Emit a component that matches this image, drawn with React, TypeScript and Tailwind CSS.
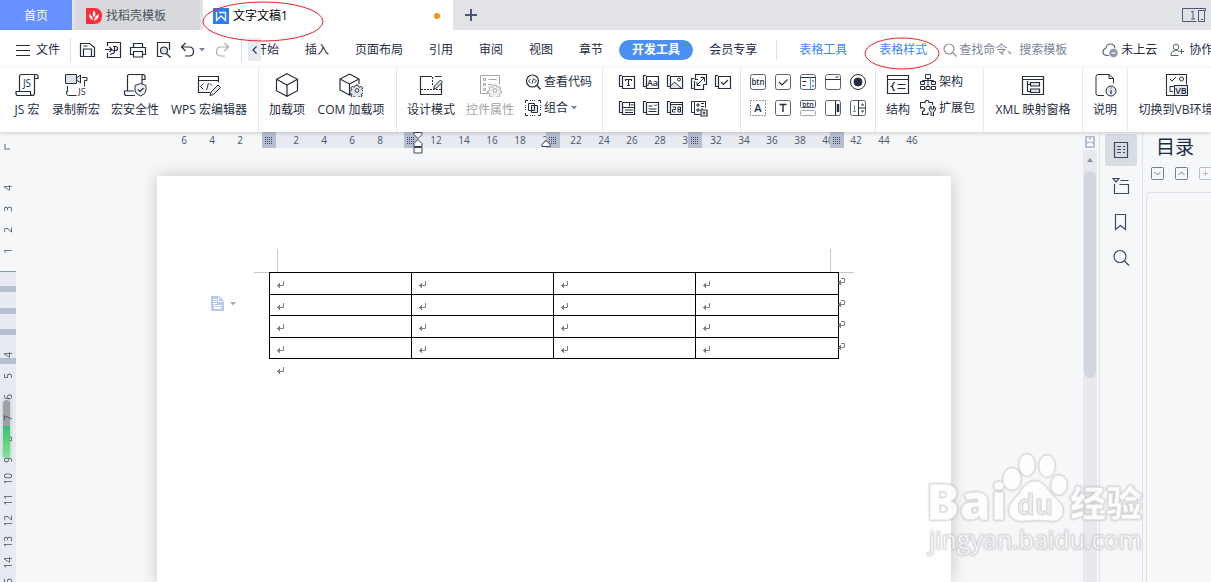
import type { ReactNode } from "react";
import clsx from "clsx";

interface SvgProps {
  w?: number;
  h?: number;
  className?: string;
  children: ReactNode;
}

function Svg({ w = 24, h = w, className, children }: SvgProps) {
  return (
    <svg
      width={w}
      height={h}
      viewBox={`0 0 ${w} ${h}`}
      fill="none"
      stroke="currentColor"
      aria-hidden="true"
      className={clsx("shrink-0", className)}
    >
      {children}
    </svg>
  );
}

interface GlyphProps {
  x: number;
  y: number;
  size: number;
  bold?: boolean;
  children: string;
}

function Glyph({ x, y, size, bold, children }: GlyphProps) {
  return (
    <text x={x} y={y} fontSize={size} fontWeight={bold ? 600 : 400} textAnchor="middle" fill="currentColor" stroke="none">
      {children}
    </text>
  );
}

const gearPath = "M-1 -5h2l.5 1.6 1.3.6 1.5-.8 1.4 1.4-.8 1.5.5 1.2 1.1.5v2l-1.5.5-.6 1.2.7 1.3-1.4 1.4-1.4-.7-1.2.5-.5 1.5h-2l-.5-1.5-1.2-.5-1.4.7-1.4-1.4.7-1.3-.6-1.2-1.5-.5v-2l1.5-.5.5-1.2-.8-1.5 1.4-1.4 1.5.8 1.2-.6z";

/* ---------- Ribbon icons, 24px ---------- */

const JsMacroIcon = (
  <Svg>
    <path d="M4.500 18.500V3.500q0-2 2-2H21q2 0 2 2v2h-3.500M21 1.500q-1.500 0-1.500 2V20q0 2.500-2 2.500H3q-2 0-2-2v-2h14.500v2q0 2 2 2" strokeWidth="1.200" />
    <Glyph x={12} y={14} size={10}>JS</Glyph>
  </Svg>
);

const RecordIcon = (
  <Svg>
    <path d="M1.500 1.500h11v9h-11zM12.500 5l4-3v8l-4-3z" fill="#dfe2e8" />
    <path d="M3.500 13v6M3.500 18.500h-1v1.500q0 2.500 2 2.500h8M18 4.500h5v3h-2.500v6" />
    <Glyph x={18} y={22} size={9}>JS</Glyph>
  </Svg>
);

const SecurityIcon = (
  <Svg>
    <path d="M4.500 17.500V3.500q0-2 2-2H20q2 0 2 2v3h-3v-3q0-2 1.500-2M19 6v5M12 22.500H3.500q-2 0-2-2v-2.500H11" strokeWidth="1.200" />
    <path d="M17.500 10.500l5.500 2v4.500q0 4-5.500 6-5.500-2-5.500-6v-4.500z" fill="#eef0f4" />
    <path d="M15 16.500l2 2 3.500-3.500" strokeWidth="1.200" />
  </Svg>
);

const EditorIcon = (
  <Svg>
    <path d="M13 19.500H1.500v-16h20v6M1.500 7.500h20" strokeWidth="1.200" />
    <path d="M6.500 10.500l-3 3 3 3M9.500 17l2-7M13 10.500l2 2" />
    <path d="M13 22.500l1-3.500 7-7 2.500 2.500-7 7z" fill="#dfe2e8" />
  </Svg>
);

const CubeIcon = (
  <Svg>
    <path d="M12 .7l10.500 5.600v11.400L12 23.300 1.500 17.700V6.300zM1.500 6.300L12 12l10.500-5.700M12 12v11" strokeWidth="1.200" />
  </Svg>
);

const ComIcon = (
  <Svg>
    <path d="M10.500 1l9.500 5v5M10.500 1L1 6v11l9.500 5V11L1 6M10.500 11L20 6M10.500 22l1.500-.5" strokeWidth="1.200" />
    <g transform="translate(18 17)">
      <path d={gearPath} fill="#dfe2e8" />
      <circle cx="0" cy=".5" r="1.800" fill="#fff" />
    </g>
  </Svg>
);

const DesignIcon = (
  <Svg>
    <path d="M13 3.500H1.500v18h21v-11M16 3.500h6.500" strokeWidth="1.200" />
    <path d="M13.500 4v8M2 16.500h20" strokeDasharray="2 1" />
    <path d="M14.500 16.500l1-3.500 6-6 2 2-6 6z" fill="#dfe2e8" />
  </Svg>
);

const PropertyIcon = (
  <Svg>
    <path d="M11 20.500H2.500v-18h19v9M5.500 5.500h2v2h-2zM5.500 10.500h2v2h-2zM5.500 15.500h2v2h-2zM10.500 6.500h8M10.500 11.500h4" />
    <g transform="translate(17 17)">
      <path d={gearPath} fill="#eee" />
      <circle cx="0" cy=".5" r="1.800" fill="#fff" />
    </g>
  </Svg>
);

const StructureIcon = (
  <Svg>
    <path d="M1.500 2.500h21v18h-21zM1.500 6.500h21" strokeWidth="1.200" />
    <path d="M9 9.500q-2 0-2 2 0 2-2.500 2 2.500 0 2.500 2 0 2 2 2M11.500 11.500h8M11.500 15.500h8" strokeWidth="1.200" />
  </Svg>
);

const XmlIcon = (
  <Svg>
    <path d="M1.500 3.500h21v18h-21zM1.500 6.500h21M6.500 8v10.500h3M6.500 11.500h3" strokeWidth="1.200" />
    <path d="M9.500 9.500h9v3.500h-9zM9.500 16h9v3.500h-9z" fill="#dfe2e8" strokeWidth="1.200" />
  </Svg>
);

const HelpIcon = (
  <Svg>
    <path d="M11 22.500H5q-2 0-2-2V3.500q0-2 2-2h11l4.500 4v5M16 1.500v4h4.500" />
    <circle cx="18" cy="18" r="5" fill="#e4e7ec" />
    <path d="M18 17v4M18 14.500v1" strokeWidth="1.200" />
  </Svg>
);

const VbIcon = (
  <Svg>
    <path d="M10 22.500H2.500v-21h20v10" strokeWidth="1.100" />
    <path d="M6 6l2 2 4-4M10 13.500H6v5h3" />
    <circle cx="17.500" cy="6" r="2" />
    <rect x="10.500" y="12.500" width="13" height="10" fill="#e4e7ec" />
    <Glyph x={17} y={21} size={9} bold>VB</Glyph>
  </Svg>
);

/* ---------- Ribbon icons, 16px ---------- */

const ViewCodeIcon = (
  <Svg w={16}>
    <circle cx="7.500" cy="7" r="6" strokeWidth="1.200" />
    <path d="M12 11.500l3.500 4" strokeWidth="1.400" />
    <path d="M5.500 5l-2 2 2 2M7 9.500l1.500-5M9.500 5l2 2-2 2" />
  </Svg>
);

const GroupIcon = (
  <Svg w={16}>
    <path d="M.5 3V.5H3M13 .5h2.500V3M.5 13v2.500H3M13 15.500h2.500V13" />
    <path d="M5 .5h6M5 15.500h6M.5 5v6M15.500 5v6" strokeDasharray="1 1" />
    <path d="M6.500 5.500h6v7h-6z" fill="#dfe2e8" />
    <path d="M3.500 3.500h6v7h-6z" />
  </Svg>
);

const SchemaIcon = (
  <Svg w={16}>
    <path d="M5.500 .5h5v4h-5zM.5 7.500h4v3h-4zM11.500 7.500h4v3h-4zM6 12.500h4v3H6zM.5 12.500h4v3h-4zM11.500 12.500h4v3h-4zM8 4.500v8M2.500 7.500v-1h11v1" />
  </Svg>
);

const PackageIcon = (
  <Svg w={16}>
    <path d="M8 14.500H2.500v-3q2-.5 2-2t-2-2q-1.500 0-2 1V2.500h4.500Q5 .5 7 .5t2 2h3.500V5M8 14.500v-2" strokeWidth="1.200" />
    <path d="M11 6q-2 1-2 3 0 2 2 3v4h2.500v-4q2-1 2-3 0-2-2-3v3H11z" fill="#dfe2e8" />
  </Svg>
);

/* ---------- Content controls, 18px ---------- */

function SheetIcon({ children }: { children: ReactNode }) {
  return (
    <Svg w={18}>
      <path d="M4 2.500H1.500v11H4M4.500 3.500h12v12h-12z" strokeWidth="1.200" />
      {children}
    </Svg>
  );
}

const contentControls = [
  { name: "格式文本", icon: <SheetIcon><path d="M7.500 8V6.500h6V8M10.500 6.500v6M9 12.500h3" strokeWidth="1.200" /></SheetIcon> },
  { name: "纯文本", icon: <SheetIcon><Glyph x={10.500} y={12.500} size={9} bold>Aa</Glyph></SheetIcon> },
  { name: "图片", icon: <SheetIcon><path d="M4.500 15.500V13l4-4 7 6.500z" fill="#dfe2e8" /><circle cx="13" cy="6.500" r="1.500" fill="#fff" /></SheetIcon> },
  {
    name: "构建基块",
    icon: (
      <Svg w={18}>
        <path d="M5.500 6.500v-5h11v10h-3M4 5.500H1.500v10h2M4.500 8v8.500h9v-5M4.500 6.500H8" strokeWidth="1.200" />
        <path d="M7 12l7-7M10.500 4.500h4v4M7 9v3.500h3.500" />
      </Svg>
    ),
  },
  { name: "复选框", icon: <SheetIcon><path d="M7 9l2.500 2.500L14 7" strokeWidth="1.200" /></SheetIcon> },
  { name: "组合框", icon: <SheetIcon><path d="M4.500 8.500h12M11.500 3.500v4M12.500 5l1.500 1.500L15.500 5M7 11h8M7 13.500h8" /></SheetIcon> },
  { name: "下拉列表", icon: <SheetIcon><path d="M12 5.500l1.500 1.500L15 5.500M6.500 7h4M6.500 10h8M6.500 12.500h8" /></SheetIcon> },
  { name: "日期选取器", icon: <SheetIcon><path d="M4.500 5.500h12M6.500 8h3v2.500h-3V13h3M12 8h2.500v5H12zM12 10.500h2.500" /></SheetIcon> },
  {
    name: "重复节",
    icon: (
      <Svg w={18}>
        <path d="M4 2.500H1.500v11H4M10 15.500H4.500v-13h11V9M7 5h2v2H7zM7 10h2v2H7zM11 4.500h3M11 7.500h3M11 10h2" />
        <path d="M11 11h6v6h-6zM14 12.500v3M12.500 14h3" strokeWidth="1.200" fill="#fff" />
      </Svg>
    ),
  },
];

/* ---------- Legacy form controls, 18px ---------- */

function FrameIcon({ children }: { children: ReactNode }) {
  return (
    <Svg w={18}>
      <rect x="1.500" y="1.500" width="15" height="15" rx="2" stroke="#5b6275" />
      {children}
    </Svg>
  );
}

const formControls = [
  { name: "命令按钮", icon: <FrameIcon><Glyph x={9} y={12} size={8} bold>btn</Glyph></FrameIcon> },
  { name: "复选框控件", icon: <FrameIcon><path d="M5 9l3 3 5.500-5.500" strokeWidth="1.200" /></FrameIcon> },
  { name: "列表框", icon: <FrameIcon><path d="M1.500 4.500h15M3.500 8.500h4M3.500 12.500h3M13 8h2M13 13h2" /><path d="M11.500 4.500v12" stroke="#4a90f0" /></FrameIcon> },
  { name: "组合框控件", icon: <FrameIcon><path d="M1.500 6.500h15M11.500 4h3" /></FrameIcon> },
  { name: "选项按钮", icon: <Svg w={18}><circle cx="9" cy="9" r="7.500" fill="#fff" /><circle cx="9" cy="9" r="4" fill="currentColor" /></Svg> },
  { name: "标签", icon: <Svg w={18}><rect x="1.500" y="1.500" width="15" height="15" strokeDasharray="1 2" /><Glyph x={9} y={13} size={11} bold>A</Glyph></Svg> },
  { name: "文本框", icon: <FrameIcon><path d="M5.500 5.500h7M9 5.500V13" strokeWidth="1.400" /></FrameIcon> },
  {
    name: "切换按钮",
    icon: (
      <Svg w={18}>
        <rect x="1.500" y="1.500" width="15" height="7" rx="1" stroke="#5b6275" />
        <rect x="1.500" y="11.500" width="15" height="5" rx="1" stroke="#a4a8b3" />
        <Glyph x={9} y={7.500} size={7} bold>btn</Glyph>
      </Svg>
    ),
  },
  { name: "滚动条", icon: <FrameIcon><path d="M11.500 1.500v15" /><path d="M14 5v8" strokeWidth="2.500" /></FrameIcon> },
  { name: "数值调节钮", icon: <FrameIcon><path d="M9.500 1.500v15M9.500 9h7M12 6h3M12 12h3M13 5h1M13 13h1" /><path d="M4.500 7.500l1-1v6M4 12.500h3" stroke="#8b90a0" /></FrameIcon> },
];

/* ---------- Ribbon ---------- */

interface RibbonButtonProps {
  icon: ReactNode;
  label: string;
  className: string;
  disabled?: boolean;
}

function RibbonButton({ icon, label, className, disabled }: RibbonButtonProps) {
  return (
    <button
      type="button"
      disabled={disabled}
      className={clsx("flex shrink-0 flex-col items-center gap-[5px] leading-4 whitespace-nowrap", disabled && "text-[#a6a6a6]", className)}
    >
      {icon}
      <span>{label}</span>
    </button>
  );
}

function RibbonGroup({ className, children }: { className?: string; children: ReactNode }) {
  return (
    <div className={clsx("flex shrink-0 items-start border-r border-[#e6e8ec] pt-[5px]", className ?? "gap-[11px] px-[10px]")}>
      {children}
    </div>
  );
}

function SmallButton({ icon, label, caret }: { icon: ReactNode; label: string; caret?: boolean }) {
  return (
    <button type="button" className="flex h-[18px] items-center gap-[3px] whitespace-nowrap">
      {icon}
      <span>{label}</span>
      {caret && <Caret />}
    </button>
  );
}

function Caret() {
  return (
    <Svg w={6} h={4} className="text-[#7a86a0]">
      <path d="M0 0h6L3 3.500z" fill="currentColor" stroke="none" />
    </Svg>
  );
}

function Ribbon() {
  return (
    <div className="relative z-10 flex h-16 shrink-0 bg-white shadow-[0_1px_4px_rgba(0,0,0,0.18)]">
      <RibbonGroup className="gap-[11px] pr-[10px] pl-[13px]">
        <RibbonButton icon={JsMacroIcon} label="JS 宏" className="w-7" />
        <RibbonButton icon={RecordIcon} label="录制新宏" className="w-12" />
        <RibbonButton icon={SecurityIcon} label="宏安全性" className="w-12" />
        <RibbonButton icon={EditorIcon} label="WPS 宏编辑器" className="w-[78px]" />
      </RibbonGroup>
      <RibbonGroup>
        <RibbonButton icon={CubeIcon} label="加载项" className="w-9" />
        <RibbonButton icon={ComIcon} label="COM 加载项" className="w-[70px]" />
      </RibbonGroup>
      <RibbonGroup>
        <RibbonButton icon={DesignIcon} label="设计模式" className="w-12" />
        <RibbonButton icon={PropertyIcon} label="控件属性" className="w-12" disabled />
        <div className="flex flex-col gap-2">
          <SmallButton icon={ViewCodeIcon} label="查看代码" />
          <SmallButton icon={GroupIcon} label="组合" caret />
        </div>
      </RibbonGroup>
      <RibbonGroup className="pr-2 pl-[15px]">
        <div className="grid grid-cols-5 gap-x-[6px] gap-y-2">
          {contentControls.map((c) => (
            <button key={c.name} type="button" aria-label={c.name}>{c.icon}</button>
          ))}
        </div>
      </RibbonGroup>
      <RibbonGroup className="px-2">
        <div className="grid grid-cols-5 gap-x-[7px] gap-y-2">
          {formControls.map((c) => (
            <button key={c.name} type="button" aria-label={c.name}>{c.icon}</button>
          ))}
        </div>
      </RibbonGroup>
      <RibbonGroup className="gap-[10px] pr-2 pl-[10px]">
        <RibbonButton icon={StructureIcon} label="结构" className="w-6" />
        <div className="flex flex-col gap-2">
          <SmallButton icon={SchemaIcon} label="架构" />
          <SmallButton icon={PackageIcon} label="扩展包" />
        </div>
      </RibbonGroup>
      <RibbonGroup>
        <RibbonButton icon={XmlIcon} label="XML 映射窗格" className="w-[78px]" />
      </RibbonGroup>
      <RibbonGroup>
        <RibbonButton icon={HelpIcon} label="说明" className="w-6" />
      </RibbonGroup>
      <div className="flex shrink-0 items-start px-[10px] pt-[5px]">
        <RibbonButton icon={VbIcon} label="切换到VB环境" className="w-[76px]" />
      </div>
    </div>
  );
}

/* ---------- Tabs and menu ---------- */

function RedCircle({ className }: { className: string }) {
  return (
    <svg className={clsx("pointer-events-none absolute z-20 overflow-visible", className)} aria-hidden="true">
      <ellipse cx="50%" cy="50%" rx="50%" ry="50%" fill="none" stroke="#e8212b" />
    </svg>
  );
}

function TabBar() {
  return (
    <div className="flex h-[30px] shrink-0 bg-[#e1e3e7]">
      <button type="button" className="w-[72px] bg-[#6691ff] pt-px text-white">首页</button>
      <button type="button" className="ml-[3px] flex w-[125px] items-center gap-1 bg-[#d8d9dc] pt-px pl-[11px] text-[#4d5361]">
        <Svg w={16}>
          <path d="M0 0h8q8 0 8 8t-8 8H0z" fill="#fb2d3a" stroke="none" />
          <path d="M8 2.500q3 3 0 7-2.500-4 0-7zM3 6q3.500 1 4 6-4-1-4-6zM13 6q0 5-5 7 .5-5 5-7z" fill="#fff" stroke="none" />
        </Svg>
        <span>找稻壳模板</span>
      </button>
      <button type="button" className="relative ml-[3px] flex w-[250px] items-center bg-white pt-px pl-[10px] text-black">
        <Svg w={16}>
          <rect width="16" height="16" fill="#2b7cf3" stroke="none" />
          <path d="M3.500 4v8.500L8 8l4.500 4.500V4.500H6" stroke="#fff" strokeWidth="1.300" />
        </Svg>
        <span className="ml-1">文字文稿1</span>
        <span className="mr-[13px] ml-auto size-[6px] rounded-full bg-[#e69a0c]" />
        <RedCircle className="top-[2px] left-0 h-[39px] w-[120px]" />
      </button>
      <button type="button" aria-label="新建标签" className="ml-3 self-center text-[#4c5877]">
        <Svg w={12}>
          <path d="M6 0v12M0 6h12" strokeWidth="2" />
        </Svg>
      </button>
      <button type="button" aria-label="窗口" className="mr-[5px] ml-auto text-[#4c5877]">
        <Svg w={24} h={14}>
          <path d="M14.500 13.500H.5V.5h23V3M9 4l2-1v8M9 11h4" />
          <path d="M16.500 2.500h6v11h-6zM19 11.500h2" />
        </Svg>
      </button>
    </div>
  );
}

const quickActions = [
  {
    name: "保存",
    icon: <Svg w={18}><path d="M1.500 15.500v-13h9l5 4v9zM4.500 15v-7h8v7M4.500 5h4" strokeWidth="1.200" /></Svg>,
  },
  {
    name: "输出为PDF",
    icon: <Svg w={18}><path d="M3.500 5V1.500h13v15h-13V12M1 8.500h7M5.500 6L8 8.500 5.500 11M9 5.500h2.500q2 0 2 2t-2 2H8.500M10.500 6v4q0 2.500-2 2.500T6.500 14" strokeWidth="1.200" /></Svg>,
  },
  {
    name: "打印",
    icon: <Svg w={18}><path d="M4.500 6.500v-4h9v4M4.500 13.500h-3v-7h15v7h-3M4.500 10.500h9v5.500h-9z" strokeWidth="1.200" /></Svg>,
  },
  {
    name: "打印预览",
    icon: <Svg w={18}><path d="M8 15.500H3.500v-14h12V9" strokeWidth="1.200" /><circle cx="10" cy="9.500" r="3.500" strokeWidth="1.200" fill="#dfe2e8" /><path d="M12.500 12.500l4 4" strokeWidth="1.200" /></Svg>,
  },
  {
    name: "撤销",
    icon: <Svg w={18}><path d="M6.500 2L2.500 6l4 4M3 6h7q4.500 0 4.500 4.500T10 15H6" strokeWidth="1.200" /></Svg>,
  },
];

const menuTabs = ["插入", "页面布局", "引用", "审阅", "视图", "章节"];

function MenuBar() {
  return (
    <div className="flex h-[38px] shrink-0 items-center bg-white pt-px whitespace-nowrap">
      <button type="button" className="ml-4 flex shrink-0 items-center gap-[6px]">
        <Svg w={14}>
          <path d="M0 2.500h14M0 7.500h14M0 12.500h14" />
        </Svg>
        <span>文件</span>
      </button>
      <div className="ml-[10px] h-6 w-px shrink-0 bg-[#dcdfe4]" />
      <div className="ml-2 flex shrink-0 items-center gap-[7px]">
        {quickActions.map((a) => (
          <button key={a.name} type="button" aria-label={a.name}>{a.icon}</button>
        ))}
      </div>
      <button type="button" aria-label="撤销列表" className="ml-[2px] shrink-0">
        <Caret />
      </button>
      <button type="button" aria-label="恢复" disabled className="ml-2 shrink-0 text-[#a9adb5]">
        <Svg w={18}>
          <path d="M11.500 2l4 4-4 4M15 6H8q-4.500 0-4.500 4.500T8 15h4" strokeWidth="1.200" />
        </Svg>
      </button>
      <div className="ml-[10px] h-6 w-px shrink-0 bg-[#dcdfe4]" />
      <button type="button" aria-label="向左滚动" className="ml-[6px] flex h-[23px] w-[13px] shrink-0 items-center justify-center bg-[#e7eaf0]">
        <Svg w={5} h={8}>
          <path d="M4.500 .5L1 4l3.500 3.500" strokeWidth="1.200" />
        </Svg>
      </button>
      <button type="button" className="flex w-[18px] shrink-0 justify-end overflow-hidden">开始</button>
      <nav className="ml-[26px] flex shrink-0 items-center gap-[26px]">
        {menuTabs.map((tab) => (
          <button key={tab} type="button">{tab}</button>
        ))}
      </nav>
      <button type="button" className="ml-4 h-5 shrink-0 rounded-full bg-[#4a90f2] px-[13px] font-bold text-white">开发工具</button>
      <button type="button" className="ml-4 shrink-0">会员专享</button>
      <div className="ml-[19px] h-5 w-px shrink-0 bg-[#dcdfe4]" />
      <button type="button" className="ml-[22px] shrink-0 text-[#4089f0]">表格工具</button>
      <button type="button" className="relative ml-8 shrink-0 text-[#4089f0]">
        表格样式
        <RedCircle className="-top-1 -left-[14px] h-[31px] w-[74px]" />
      </button>
      <label htmlFor="command-search" className="ml-4 shrink-0 text-[#8b93a6]">
        <Svg w={14}>
          <circle cx="6" cy="6" r="5" strokeWidth="1.200" />
          <path d="M9.500 9.500l4 4" strokeWidth="1.200" />
        </Svg>
      </label>
      <input
        id="command-search"
        type="text"
        aria-label="查找命令"
        placeholder="查找命令、搜索模板"
        className="ml-[2px] w-[143px] shrink-0 bg-transparent outline-none placeholder:text-[#7c8397]"
      />
      <button type="button" className="flex shrink-0 items-center gap-[3px]">
        <Svg w={16} className="text-[#5c6375]">
          <path d="M7 13.500H4.500Q1 13 1 10t3-4q.5-4 4.500-4T13 6.500" strokeWidth="1.200" />
          <circle cx="11.500" cy="11" r="4.300" fill="#8f97aa" stroke="none" />
          <path d="M9.500 11h4" stroke="#fff" strokeWidth="1.300" />
        </Svg>
        <span>未上云</span>
      </button>
      <button type="button" className="ml-[13px] flex shrink-0 items-center gap-[5px]">
        <Svg w={14}>
          <circle cx="6" cy="4" r="2.800" stroke="#5c6375" />
          <path d="M8.500 12.500H1V11q.5-3.500 5-3.500 2 0 3 .5M11.500 6v5M9 8.500h5" stroke="#5c6375" />
        </Svg>
        <span>协作</span>
      </button>
    </div>
  );
}

/* ---------- Rulers ---------- */

const rulerNumbers = [6, 4, 2, 0, ...Array.from({ length: 23 }, (_, i) => (i + 1) * 2)];
const columnHandles = ["left-[262px]", "left-[404px]", "left-[546px]", "left-[688px]", "left-[830px]"];

function HorizontalRuler() {
  return (
    <div className="relative flex h-4 shrink-0 pl-[170px] text-[10px] leading-4 text-[#4b556b]">
      <div className="absolute inset-y-0 left-[276px] w-[554px] bg-[#e7eaf0]" />
      {rulerNumbers.map((n, i) => (
        <span key={i} className={clsx("relative w-7 shrink-0 text-center", (n === 0 || n === 10) && "invisible")}>{n}</span>
      ))}
      {columnHandles.map((left) => (
        <div key={left} className={clsx("absolute inset-y-0 w-[14px] bg-[#b6bed1]", left)}>
          <Svg w={14} h={16} className="text-[#3d465c]">
            <path d="M3 5.500h8M3 7.500h8M3 9.500h8M3 11.500h8" strokeDasharray="1 1" />
          </Svg>
        </div>
      ))}
      <Svg w={10} h={22} className="absolute top-0 left-[413px] text-[#3d465c]">
        <path d="M1 .5h8v2L5 6.500 1 2.500zM1 14.500v-3l4-4 4 4v3zM1 15.500h8v5.500H1z" fill="#fff" />
      </Svg>
      <Svg w={10} h={16} className="absolute top-0 left-[541px] text-[#3d465c]">
        <path d="M1 14.500v-2l4-4 4 4v2z" fill="#fff" />
      </Svg>
    </div>
  );
}

const marginNumbers = [4, 3, 2, 1];
const bodyNumbers = Array.from({ length: 15 }, (_, i) => i + 1);
const rowHandles = ["top-[14px]", "top-[36px]", "top-[57px]", "top-[86px]"];

function RulerNumber({ n, faint }: { n: number; faint?: boolean }) {
  return (
    <span className="flex h-[21px] shrink-0 items-end justify-center">
      <span className={clsx("rotate-180 [writing-mode:vertical-rl]", faint && "invisible")}>{n}</span>
    </span>
  );
}

function VerticalRuler() {
  return (
    <div className="relative w-4 shrink-0 text-[10px] leading-3 text-[#4b556b]">
      <Svg w={6} className="-mt-1 ml-1 text-[#a9afbe]">
        <path d="M1 0v5h5" strokeWidth="2" />
      </Svg>
      <div className="mt-[20px] flex h-[101px] flex-col">
        {marginNumbers.map((n) => <RulerNumber key={n} n={n} />)}
      </div>
      <div className="relative flex h-[330px] flex-col border-t border-[#8796a8] bg-[#e7eaf0] pt-[2px]">
        {bodyNumbers.map((n) => <RulerNumber key={n} n={n} faint={n < 4} />)}
        {rowHandles.map((top) => (
          <div key={top} className={clsx("absolute left-0 h-[6px] w-4 bg-[#b6bed1]", top)} />
        ))}
        <div className="absolute top-[128px] left-[3px] h-[58px] w-[7px] overflow-hidden rounded-full bg-[#55565a]/50 shadow-[0_0_4px_rgba(0,0,0,0.2)]">
          <div className="mt-[26px] h-8 bg-linear-to-b from-[#1fc46a]/90 to-[#7cf08a]/90" />
        </div>
      </div>
    </div>
  );
}

/* ---------- Document ---------- */

function ReturnMark({ className }: { className?: string }) {
  return (
    <Svg w={8} className={clsx("text-[#808080]", className)}>
      <path d="M6.500 0v4.500H0M2.500 2v5M1.500 3v3" />
    </Svg>
  );
}

function RowEndMark({ className }: { className?: string }) {
  return (
    <Svg w={8} className={clsx("text-[#808080]", className)}>
      <path d="M3 .5h3.500v4H0M2.500 2v5M1.500 3v3" />
    </Svg>
  );
}

const rowHeights = ["h-[22px]", "h-[21px]", "h-[22px]", "h-[21px]"];

function DocumentPage() {
  return (
    <div className="relative mt-7 ml-[141px] min-h-0 w-[794px] flex-1 bg-white pt-24 pl-28 shadow-[0_0_16px_rgba(0,0,0,0.2)]">
      <div className="absolute top-[73px] left-[120px] h-[23px] w-px bg-[#c8c8c8]" />
      <div className="absolute top-24 left-[97px] h-px w-[15px] bg-[#c8c8c8]" />
      <div className="absolute top-[73px] left-[673px] h-[23px] w-px bg-[#c8c8c8]" />
      <div className="absolute top-24 left-[682px] h-px w-[15px] bg-[#c8c8c8]" />
      <button type="button" aria-label="段落选项" className="absolute top-[120px] left-[54px] flex items-center gap-[6px] text-[#a9a9a9]">
        <Svg w={13} h={15}>
          <path d="M0 0h8l5 5v10H0z" fill="#b5cbeb" stroke="none" />
          <path d="M7.500 1v4.500H12M2 3.500h4M2 5.500h4M2 7.500h4M2 9.500h9M2.500 11.500h8M6.500 9v4M3 12.500h7" stroke="#fff" />
        </Svg>
        <Svg w={6} h={4}>
          <path d="M0 0h6L3 3.500z" fill="currentColor" stroke="none" />
        </Svg>
      </button>
      <table className="w-[570px] table-fixed border-collapse">
        <colgroup>
          <col className="w-[142px]" />
          <col className="w-[142px]" />
          <col className="w-[142px]" />
          <col />
        </colgroup>
        <tbody>
          {rowHeights.map((height, row) => (
            <tr key={row} className={height}>
              {[0, 1, 2, 3].map((col) => (
                <td key={col} className="relative border border-black p-0 leading-none">
                  <ReturnMark className="mt-[3px] ml-[7px]" />
                  {col === 3 && <RowEndMark className="absolute top-[5px] -right-2" />}
                </td>
              ))}
            </tr>
          ))}
        </tbody>
      </table>
      <ReturnMark className="mt-2 ml-2" />
    </div>
  );
}

function ScrollBar() {
  return (
    <div className="flex w-[14px] shrink-0 flex-col items-center pt-1">
      <Svg w={10} h={12} className="text-[#b6bed1]">
        <rect width="10" height="12" rx="1" fill="currentColor" stroke="none" />
        <path d="M2 1.500h2v2h2v-2h2v4H2zM2 10V8l3-1.500L8 8v2z" fill="#fff" stroke="none" />
      </Svg>
      <div className="mt-[2px] flex w-full flex-1 flex-col items-center bg-[#e7e9ef] pt-2">
        <Svg w={6} h={4} className="text-[#8790a8]">
          <path d="M0 4h6L3 0z" fill="currentColor" stroke="none" />
        </Svg>
        <div className="mt-[9px] h-[207px] w-3 rounded-full bg-[#d3d6de]" />
      </div>
    </div>
  );
}

/* ---------- Side panes ---------- */

const sideTools = [
  {
    name: "目录",
    icon: <Svg w={18}><path d="M2.500 1.500h13v15h-13zM5 5.500h4M11 5.500h2M5 8.500h4M11 8.500h2M5 11.500h4M11 11.500h2" strokeWidth="1.200" /></Svg>,
  },
  {
    name: "章节",
    icon: <Svg w={18}><path d="M1 1.500h6L4 5zM8.500 3.500h8M2.500 7v9.500h14v-9h-9" strokeWidth="1.200" /></Svg>,
  },
  {
    name: "书签",
    icon: <Svg w={18}><path d="M3.500 1.500h10v15l-5-4-5 4z" strokeWidth="1.200" /></Svg>,
  },
  {
    name: "查找",
    icon: <Svg w={18}><circle cx="8" cy="7.500" r="6" strokeWidth="1.200" /><path d="M12.500 12l4.500 4.500" strokeWidth="1.200" /></Svg>,
  },
];

function SideBar() {
  return (
    <div className="ml-[2px] flex w-11 shrink-0 flex-col items-center gap-1 border-x border-[#dfe1e6] pt-[2px] text-[#3d4a63]">
      {sideTools.map((tool, i) => (
        <button
          key={tool.name}
          type="button"
          aria-label={tool.name}
          className={clsx("flex size-8 items-center justify-center rounded-xs", i === 0 && "bg-[#d8dde4]")}
        >
          {tool.icon}
        </button>
      ))}
    </div>
  );
}

function OutlinePanel() {
  return (
    <div className="flex w-[68px] shrink-0 flex-col overflow-hidden">
      <h2 className="ml-[13px] h-[30px] text-[19px] leading-[30px] whitespace-nowrap text-[#1f2a44]">目录</h2>
      <div className="mt-[5px] ml-2 flex gap-[11px] text-[#767b85]">
        <button type="button" aria-label="展开" className="shrink-0">
          <Svg w={13}><rect x=".5" y=".5" width="12" height="12" rx="1" /><path d="M3.500 5l3 3 3-3" /></Svg>
        </button>
        <button type="button" aria-label="收起" className="shrink-0">
          <Svg w={13}><rect x=".5" y=".5" width="12" height="12" rx="1" /><path d="M3.500 8l3-3 3 3" /></Svg>
        </button>
        <button type="button" aria-label="添加" className="shrink-0 text-[#b9bcc3]">
          <Svg w={13}><rect x=".5" y=".5" width="12" height="12" rx="1" /><path d="M6.500 4v5M4 6.500h5" /></Svg>
        </button>
      </div>
      <div className="mt-3 ml-[3px] flex-1 rounded-tl-sm border-t border-l border-[#dfe1e6]" />
    </div>
  );
}

function Watermark() {
  return (
    <svg
      width="230"
      height="120"
      viewBox="0 0 230 120"
      className="pointer-events-none absolute right-[57px] bottom-[14px] z-20 font-['Open_Sans','Noto_Sans_CJK_SC',sans-serif] opacity-85 drop-shadow-[0_0_1px_rgba(0,0,0,0.3)]"
      fill="#fff"
      stroke="#dcdde0"
      strokeWidth="1"
      aria-label="Baidu 经验"
    >
      <text x="2" y="72" fontSize="50" fontWeight="800">Bai</text>
      <ellipse cx="88" cy="31" rx="9" ry="11" />
      <ellipse cx="103" cy="17" rx="8" ry="11" />
      <ellipse cx="123" cy="18" rx="8" ry="11" />
      <ellipse cx="135" cy="37" rx="8" ry="10" />
      <path d="M111 33c8 0 12 8 17 14 6 6 11 9 11 16 0 7-6 11-13 10-6-1-20-1-26 0-8 1-15-3-15-11 0-7 5-10 10-16 5-7 8-13 16-13z" />
      <text x="93" y="67" fontSize="28" fontWeight="700" fill="#e9eaec" stroke="#d0d1d4">du</text>
      <text x="146" y="69" fontSize="36" fontWeight="900">经验</text>
      <text x="5" y="101" fontSize="25">jingyan.baidu.com</text>
    </svg>
  );
}

export default function App() {
  return (
    <div className="relative flex h-screen flex-col overflow-hidden bg-[#f5f7f9] font-['Open_Sans','Noto_Sans_CJK_SC',sans-serif] text-xs text-[#262d3f]">
      <TabBar />
      <MenuBar />
      <Ribbon />
      <main className="flex min-h-0 flex-1">
        <div className="flex min-w-0 flex-1 flex-col">
          <HorizontalRuler />
          <div className="flex min-h-0 flex-1">
            <VerticalRuler />
            <div className="flex min-w-0 flex-1 flex-col overflow-hidden">
              <DocumentPage />
            </div>
          </div>
        </div>
        <ScrollBar />
        <SideBar />
        <OutlinePanel />
      </main>
      <Watermark />
    </div>
  );
}
